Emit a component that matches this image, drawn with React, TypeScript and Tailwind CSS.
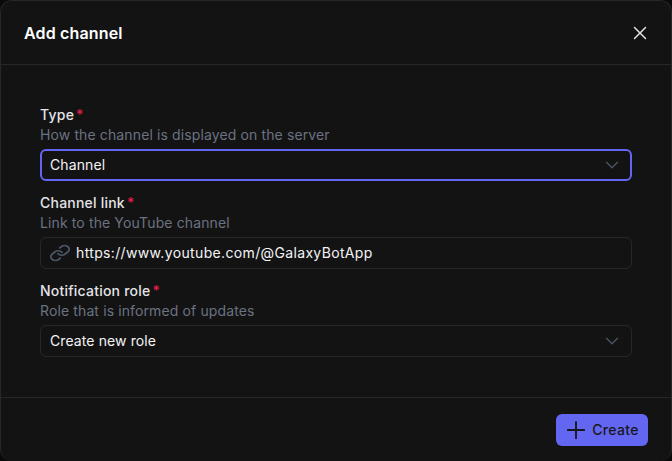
import { ChevronDown, Plus, X } from 'lucide-react';

const font = { fontFamily: 'Inter, "Noto Sans", sans-serif' };

function FieldLabel({ title, hint }: { title: string; hint: string }) {
  return (
    <div className="mb-[4px]">
      <div className="flex h-[20px] items-center text-[14px] font-medium leading-[20px] tracking-[0.22px] text-[#e4e4e7]">
        {title}
        <span className="ml-[2px] text-[#e11d48]">*</span>
      </div>
      <div className="h-[20px] text-[14px] leading-[20px] tracking-[0.12px] text-[#6b7280]">{hint}</div>
    </div>
  );
}

function SelectBox({ value, focused }: { value: string; focused?: boolean }) {
  return (
    <div
      className={`flex h-[32px] items-center justify-between rounded-[6px] text-[14px] tracking-[0.1px] text-[#f4f4f5] ${
        focused ? 'border-2 border-[#6366f1] pl-[8px] pr-[7px]' : 'border border-[#27272a] pl-[9px] pr-[8px]'
      }`}
    >
      <span className="pb-[2px]">{value}</span>
      <ChevronDown size={22} strokeWidth={1.5} className="text-[#4b5563]" />
    </div>
  );
}

export default function App() {
  return (
    <div className="h-[461px] w-[672px] overflow-hidden bg-[#0a0a0b]" style={font}>
      <div className="flex h-full flex-col rounded-[12px] border border-b-0 border-[#27272a] bg-[#131314]">
        <div className="flex h-[64px] shrink-0 items-center justify-between border-b border-[#27272a] pl-[23px] pr-[20px]">
          <h1 className="text-[16px] font-semibold tracking-[0.15px] text-white">Add channel</h1>
          <X size={22} strokeWidth={1.6} className="text-[#e4e4e7]" />
        </div>

        <div className="flex-1 px-[39px] pt-[40px]">
          <div className="mb-[12px]">
            <FieldLabel title="Type" hint="How the channel is displayed on the server" />
            <SelectBox value="Channel" focused />
          </div>

          <div className="mb-[12px]">
            <FieldLabel title="Channel link" hint="Link to the YouTube channel" />
            <div className="flex h-[32px] items-center gap-[5px] rounded-[6px] border border-[#27272a] pl-[8px] text-[14px] tracking-[0.35px] text-[#f4f4f5]">
              <svg
                width="22"
                height="18"
                viewBox="0 0 24 24"
                preserveAspectRatio="none"
                fill="none"
                stroke="#4b5563"
                strokeWidth="2.2"
                strokeLinecap="round"
                strokeLinejoin="round"
              >
                <path d="M10 13a5 5 0 0 0 7.54.54l3-3a5 5 0 0 0-7.07-7.07l-1.72 1.71" />
                <path d="M14 11a5 5 0 0 0-7.54-.54l-3 3a5 5 0 0 0 7.07 7.07l1.71-1.71" />
              </svg>
              <span className="pb-[2px]">https://www.youtube.com/@GalaxyBotApp</span>
            </div>
          </div>

          <div>
            <FieldLabel title="Notification role" hint="Role that is informed of updates" />
            <SelectBox value="Create new role" />
          </div>
        </div>

        <div className="flex h-[64px] shrink-0 items-center justify-end border-t border-[#27272a] pr-[23px]">
          <button
            type="button"
            className="flex h-[32px] w-[92px] items-center justify-center gap-[2px] rounded-[6px] bg-[#6366f1] pr-[3px] text-[14px] font-medium tracking-[0.3px] text-[#18181b]"
          >
            <Plus size={28} strokeWidth={1.6} />
            Create
          </button>
        </div>
      </div>
    </div>
  );
}
